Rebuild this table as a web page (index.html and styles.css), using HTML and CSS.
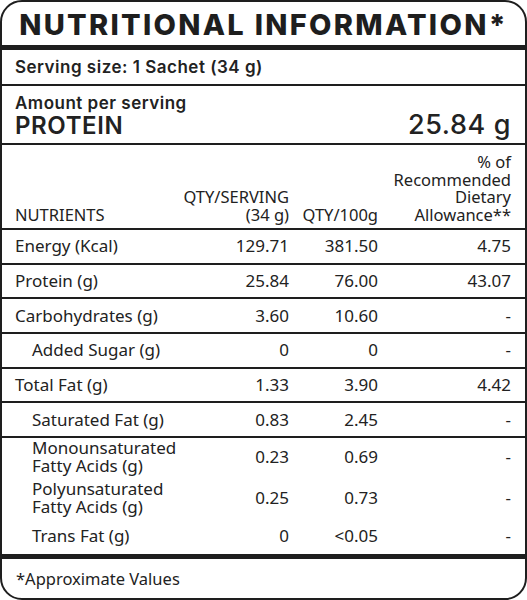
FILE: index.html
```html
<!DOCTYPE html>
<html lang="en">
<head>
    <meta charset="UTF-8">
    <meta name="viewport" content="width=device-width, initial-scale=1.0">
    <title>Nutritional Information</title>
    <link rel="stylesheet" href="styles.css">
</head>
<body>
    <div class="label">
        <h1 class="title">NUTRITIONAL INFORMATION*</h1>

        <div class="serving">Serving size: 1 Sachet (34 g)</div>

        <div class="amount">
            <div class="amount-caption">Amount per serving</div>
            <div class="amount-main">
                <span class="amount-name">PROTEIN</span>
                <span class="amount-value">25.84 g</span>
            </div>
        </div>

        <div class="facts">
            <div class="row head">
                <div class="cell name">NUTRIENTS</div>
                <div class="cell num">QTY/SERVING<br>(34 g)</div>
                <div class="cell num">QTY/100g</div>
                <div class="cell num">% of<br>Recommended<br>Dietary<br>Allowance**</div>
            </div>
            <div class="row">
                <div class="cell name">Energy (Kcal)</div>
                <div class="cell num">129.71</div>
                <div class="cell num">381.50</div>
                <div class="cell num">4.75</div>
            </div>
            <div class="row">
                <div class="cell name">Protein (g)</div>
                <div class="cell num">25.84</div>
                <div class="cell num">76.00</div>
                <div class="cell num">43.07</div>
            </div>
            <div class="row">
                <div class="cell name">Carbohydrates (g)</div>
                <div class="cell num">3.60</div>
                <div class="cell num">10.60</div>
                <div class="cell num">-</div>
            </div>
            <div class="row">
                <div class="cell name sub">Added Sugar (g)</div>
                <div class="cell num">0</div>
                <div class="cell num">0</div>
                <div class="cell num">-</div>
            </div>
            <div class="row">
                <div class="cell name">Total Fat (g)</div>
                <div class="cell num">1.33</div>
                <div class="cell num">3.90</div>
                <div class="cell num">4.42</div>
            </div>
            <div class="row">
                <div class="cell name sub">Saturated Fat (g)</div>
                <div class="cell num">0.83</div>
                <div class="cell num">2.45</div>
                <div class="cell num">-</div>
            </div>
            <div class="row plain mono">
                <div class="cell name sub">Monounsaturated<br>Fatty Acids (g)</div>
                <div class="cell num">0.23</div>
                <div class="cell num">0.69</div>
                <div class="cell num">-</div>
            </div>
            <div class="row plain poly">
                <div class="cell name sub">Polyunsaturated<br>Fatty Acids (g)</div>
                <div class="cell num">0.25</div>
                <div class="cell num">0.73</div>
                <div class="cell num">-</div>
            </div>
            <div class="row plain trans">
                <div class="cell name sub">Trans Fat (g)</div>
                <div class="cell num">0</div>
                <div class="cell num">&lt;0.05</div>
                <div class="cell num">-</div>
            </div>
        </div>

        <div class="footnote">*Approximate Values</div>
    </div>
</body>
</html>
```

FILE: styles.css
```css
body {
    margin: 0;
    background: #ffffff;
    color: #222222;
    font-family: "Noto Sans", sans-serif;
}

.label {
    box-sizing: border-box;
    width: 527px;
    height: 600px;
    border: 2px solid #1e1e1e;
    border-radius: 22px;
    overflow: hidden;
}

.title {
    margin: 0;
    height: 43px;
    border-bottom: 5px solid #1e1e1e;
    font-family: Inter, sans-serif;
    font-weight: 800;
    font-size: 29px;
    letter-spacing: 2.3px;
    line-height: 46px;
    text-align: center;
    color: #1e1e1e;
}

.serving {
    height: 34px;
    padding-left: 13px;
    border-bottom: 2px solid #1e1e1e;
    font-family: Inter, sans-serif;
    font-weight: 600;
    font-size: 17px;
    letter-spacing: 0.5px;
    line-height: 34px;
}

.amount {
    box-sizing: border-box;
    height: 59px;
    padding: 8px 14px 0 13px;
    border-bottom: 2px solid #1e1e1e;
    font-family: Inter, sans-serif;
    font-weight: 600;
}

.amount-caption {
    font-size: 17px;
    letter-spacing: 0.5px;
    line-height: 18px;
}

.amount-main {
    display: flex;
    justify-content: space-between;
    align-items: baseline;
}

.amount-name {
    font-size: 24px;
    letter-spacing: 0.6px;
    line-height: 26px;
}

.amount-value {
    font-size: 27px;
    font-weight: 500;
    letter-spacing: 0.6px;
    line-height: 26px;
}

.facts {
    font-size: 17px;
}

.row {
    display: grid;
    grid-template-columns: 1fr 110px 89px 133px;
    align-items: center;
    height: 32.67px;
    padding: 0 14px 0 13px;
    border-bottom: 2px solid #1e1e1e;
    line-height: 18px;
}

.row.head {
    box-sizing: border-box;
    height: 85px;
    align-items: end;
    padding-bottom: 5px;
    font-size: 16.5px;
    line-height: 17.4px;
}

.row.plain {
    border-bottom: none;
}

.row.mono {
    height: 39px;
}

.row.poly {
    height: 42px;
}

.row.trans {
    height: 35px;
    border-bottom: 5px solid #1e1e1e;
}

.cell.num {
    text-align: right;
}

.cell.sub {
    padding-left: 17px;
}

.footnote {
    height: 39px;
    padding-left: 14px;
    font-size: 16.5px;
    line-height: 39px;
}
```
